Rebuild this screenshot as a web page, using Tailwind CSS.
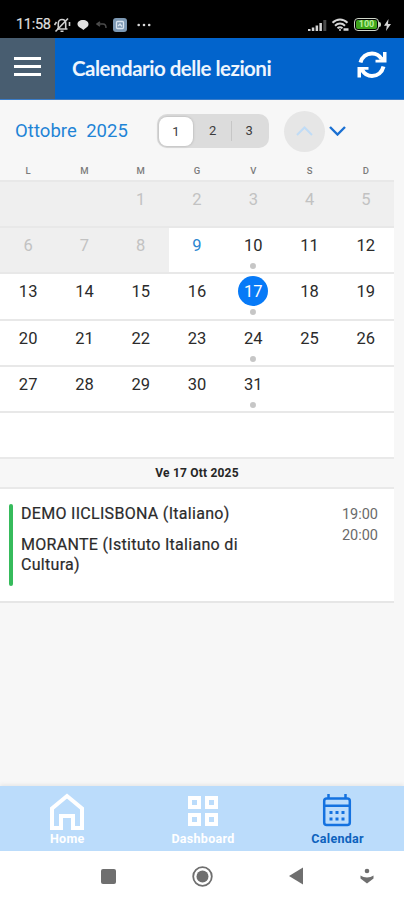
<!DOCTYPE html>
<html lang="it">
<head>
    <meta charset="UTF-8">
    <meta name="viewport" content="width=device-width, initial-scale=1">
    <title>Calendario delle lezioni</title>
    <script src="https://cdn.jsdelivr.net/npm/@tailwindcss/browser@4"></script>
</head>
<body class="w-[404px] h-[900px] overflow-hidden flex flex-col bg-[#f7f7f7] font-[Roboto,sans-serif] text-[#2b2b2b]">

    <!-- status bar -->
    <div class="h-[38px] shrink-0 bg-black text-[#dedede] flex items-center pt-[11px] pl-4 pr-[13px]">
        <span class="w-[35px] pt-px text-[14.5px] leading-none tracking-[-0.3px] whitespace-nowrap [-webkit-text-stroke:0.2px]">11:58</span>
        <svg class="ml-[2px]" width="18" height="16" viewBox="0 0 18 16" fill="none" stroke="#d0d0d0" stroke-width="1.600">
            <path d="M4 12h10.500M5.300 11.500V6.500C5.300 4 7 2.500 9 2.500S12.700 4 12.700 6.500v5M7.500 14.200h3M1.500 8l2-3M16.500 5v4"/>
            <path d="M2.500 14.500L15 1.500"/>
        </svg>
        <svg class="ml-[6px]" width="12" height="12" viewBox="0 0 12 12" fill="#e2e2e2"><path d="M6 1c3.300 0 5.500 1.700 5.500 4.300S8.500 9 6.500 11C5.500 9.500.5 8.500.5 5.300.5 2.700 2.700 1 6 1z"/></svg>
        <svg class="ml-[7px]" width="11" height="8" viewBox="0 0 11 8" fill="none" stroke="#4b4b4b" stroke-width="1.500"><path d="M4 .8L1 3l3 2.200M1.500 3H7c2 0 3 1.200 3 4"/></svg>
        <span class="ml-[6px] size-[14px] rounded-[3px] bg-[#7c98b3] flex items-center justify-center">
            <svg width="10" height="10" viewBox="0 0 10 10" fill="none" stroke="#d9e4ee" stroke-width="1.300"><rect x="1.500" y="1.500" width="7" height="7" rx="1"/><path d="M3 6l2-2 2 2.500"/></svg>
        </span>
        <svg class="ml-[10px]" width="14" height="4" viewBox="0 0 14 4" fill="#d8d8d8"><circle cx="1.700" cy="2" r="1.300"/><circle cx="7" cy="2" r="1.300"/><circle cx="12.200" cy="2" r="1.300"/></svg>
        <div class="ml-auto flex items-center">
            <svg width="19" height="12" viewBox="0 0 19 12" fill="#d6d6d6"><path d="M0 10h2.500v2H0zM3.800 8.500h2.500V12H3.800zM7.600 6.500h2.500V12H7.600zM11.400 4h2.500v8h-2.500z"/><path fill="#4a4a4a" d="M15.300 1h3v11h-3z"/></svg>
            <svg class="ml-1" width="19" height="14" viewBox="0 0 19 14" fill="none" stroke="#d6d6d6" stroke-width="2"><path d="M1.500 4.800C6 .5 12 .5 16.500 4.800M4 7.700c3-2.800 7-2.800 10 0M6.500 10.300c1.500-1.300 3.500-1.300 5 0"/><circle cx="9" cy="12" r="1" fill="#d6d6d6" stroke="none"/><path d="M12.500 11.500h5" stroke-width="2.500"/></svg>
            <span class="ml-1 w-[25px] h-[13px] rounded-[4px] border-[1.5px] border-[#cfd6c9] p-px flex">
                <span class="flex-1 rounded-[2px] bg-[#3fa51c] text-[9px] leading-[9px] font-bold text-[#b9f09c] text-center">100</span>
            </span>
            <span class="w-[2px] h-[5px] rounded-r bg-[#cfd6c9]"></span>
            <svg class="ml-[3px]" width="7" height="12" viewBox="0 0 7 12" fill="#d6d6d6"><path d="M4.500 0L0 6.800h2.800L2 12l5-7H4z"/></svg>
        </div>
    </div>

    <!-- header -->
    <header class="h-[62px] shrink-0 bg-[#0264cc] flex border-b border-[#3a7cc8]">
        <button class="w-[55px] bg-[#485d70] flex flex-col items-center gap-[5px] pt-[19px]">
            <span class="w-[27px] h-[3px] bg-white"></span>
            <span class="w-[27px] h-[3px] bg-white"></span>
            <span class="w-[27px] h-[3px] bg-white"></span>
        </button>
        <h1 class="pl-[17px] pt-[16px] text-[20.5px] leading-7 font-bold font-[Lato,sans-serif] text-[#eef5fd] tracking-[-0.5px] whitespace-nowrap">Calendario delle lezioni</h1>
        <svg class="ml-auto mr-[16px] mt-[12px]" width="32" height="30" viewBox="0 0 32 30" fill="none" stroke="#fff" stroke-width="4">
            <path d="M4.500 12.500C6 7 10.500 3.500 16 3.500c4 0 7.500 2 9.500 5.500M27.500 16.500c-1.500 6-6 9.500-11.500 9.500-4 0-7.500-2-9.500-5.500"/>
            <path d="M30.500 2v10.500h-11v-2.800H24l3-3V2zM1.500 27.500V17h11v2.800H8l-3 3v4.700z" fill="#fff" stroke="none"/>
        </svg>
    </header>

    <main class="flex-1 flex flex-col">
        <!-- month and week switch -->
        <div class="h-[62px] shrink-0 flex items-center pl-[15px]">
            <h2 class="w-[142px] pt-[2px] text-[18.5px] text-[#1f84d6] tracking-[0.05px] whitespace-pre">Ottobre  2025</h2>
            <div class="w-[112px] h-[34px] p-[2px] rounded-[10px] bg-[#dcdcdc] flex items-center text-[13px] text-[#3c3c3c] text-center">
                <span class="w-[34px] h-[29px] leading-[29px] rounded-[8px] bg-white shadow-[0_0_2px_1px_#c4c4c4]">1</span>
                <span class="flex-1 pl-[2px]">2</span>
                <span class="w-px h-5 bg-[#c6c6c6]"></span>
                <span class="flex-1">3</span>
            </div>
            <button class="ml-[15px] size-[41px] rounded-full bg-[#e6e6e6] flex items-center justify-center">
                <svg width="17" height="10" viewBox="0 0 17 10" fill="none" stroke="#c0dcf6" stroke-width="2"><path d="M1 9l7.500-7.500L16 9"/></svg>
            </button>
            <button class="ml-[4px]">
                <svg width="17" height="10" viewBox="0 0 17 10" fill="none" stroke="#1b70d2" stroke-width="2.400"><path d="M1 1l7.500 7.500L16 1"/></svg>
            </button>
        </div>

        <!-- calendar -->
        <div class="w-[394px] grid grid-cols-7 h-[18px] text-center text-[9.5px] leading-[18px] font-medium text-[#7b7b7b]">
            <span>L</span><span>M</span><span>M</span><span>G</span><span>V</span><span>S</span><span>D</span>
        </div>
        <div id="days" class="w-[394px] grid grid-cols-7 auto-rows-[46.2px] text-center text-[16.5px] bg-white"></div>

        <!-- lessons of the day -->
        <section class="w-[394px]">
            <h3 class="h-[32px] border-y-2 border-[#e9e9e9] text-center text-[12px] leading-[29px] font-bold tracking-[0.2px] text-[#262626] bg-[#f7f7f7]">Ve 17 Ott 2025</h3>
            <div class="h-[114px] bg-white border-b-2 border-[#e6e6e6] flex pl-[9px] pr-4 pt-[15px]">
                <span class="w-[4px] h-[82px] rounded-sm bg-[#36bb5c]"></span>
                <div class="ml-2 w-[240px] text-[16px] leading-[20.6px]">
                    <p class="tracking-[0.3px] whitespace-nowrap [-webkit-text-stroke:0.2px]">DEMO IICLISBONA (Italiano)</p>
                    <p class="mt-[10px] tracking-[0.3px] [-webkit-text-stroke:0.2px]">MORANTE (Istituto Italiano di<br>Cultura)</p>
                </div>
                <div class="ml-auto text-right text-[14.5px] leading-[21px] text-[#6a6a6a]">
                    <p>19:00</p>
                    <p>20:00</p>
                </div>
            </div>
        </section>
    </main>

    <!-- tabs -->
    <nav class="h-[65px] shrink-0 bg-[#bbdcfb] shadow-[0_-1px_4px_#e2e2e2] grid grid-cols-3 text-[12.5px] leading-[14px] font-bold text-white">
        <a class="flex flex-col items-center pt-[7px]">
            <svg width="36" height="38" viewBox="0 0 36 38" fill="none" stroke="#fff" stroke-width="4"><path d="M3 35V15.500L18 3l15 12.500V35h-9V23H12v12z"/></svg>
            <span class="mt-px tracking-[0.3px]">Home</span>
        </a>
        <a class="flex flex-col items-center pt-[10px]">
            <svg class="ml-[2px]" width="30" height="30" viewBox="0 0 30 30" fill="none" stroke="#fff" stroke-width="4"><path d="M2 2h9v9H2zM19 2h9v9h-9zM2 19h9v9H2zM19 19h9v9h-9z"/></svg>
            <span class="mt-[6px] ml-[2px] tracking-[0.3px]">Dashboard</span>
        </a>
        <a class="flex flex-col items-center pt-[8px] text-[#0d62bd]">
            <svg width="30" height="33" viewBox="0 0 30 33" fill="none" stroke="#1472e0" stroke-width="2.500">
                <rect x="2.200" y="4.500" width="25.600" height="26.500" rx="2.500"/>
                <path d="M2 11.800h26M6.500 0v5M23.500 0v5"/>
                <path d="M7.500 18.500h3M13.500 18.500h3M19.500 18.500h3M7.500 25h3M13.500 25h3M19.500 25h3" stroke-width="3"/>
            </svg>
            <span class="mt-[5px] ml-[2px] tracking-[0.3px]">Calendar</span>
        </a>
    </nav>

    <!-- system buttons -->
    <div class="h-[49px] shrink-0 bg-white flex items-center pt-px pl-[101px] text-[#6f6f6f]">
        <span class="size-[15px] rounded-[2px] bg-current"></span>
        <svg class="ml-[76px]" width="21" height="21" viewBox="0 0 21 21"><circle cx="10.500" cy="10.500" r="9.300" fill="none" stroke="currentColor" stroke-width="1.800"/><circle cx="10.500" cy="10.500" r="6" fill="currentColor"/></svg>
        <svg class="ml-[76px]" width="14" height="18" viewBox="0 0 14 18" fill="currentColor"><path d="M14 .5v17L0 9z"/></svg>
        <svg class="ml-[57px]" width="14" height="16" viewBox="0 0 14 16" fill="currentColor"><circle cx="7" cy="3" r="2.300"/><path d="M.5 7.500C4 10 10 10 13.500 7.500v3L7 15.500.5 10.500z"/></svg>
    </div>

    <script>
        const events = [10, 17, 24, 31];
        let html = "";
        for (let i = 0; i < 42; i++) {
            const day = i - 1; // the month starts on a Wednesday
            const valid = day >= 1 && day <= 31;
            let cell = "relative border-t-2 border-[#e8e8e8] flex justify-center pt-[2px]";
            let num = "size-[30px] rounded-full leading-[32px]";
            if (day < 9) cell += " bg-[#efefef] text-[#c2c2c2]";
            if (day === 9) num += " text-[#2a85d0]";
            if (day === 17) num += " bg-[#077af7] text-white";
            html += `<div class="${cell}"><span class="${num}">${valid ? day : ""}</span>`;
            if (events.includes(day)) html += `<i class="absolute left-1/2 -ml-[3px] top-[35px] size-[6px] rounded-full bg-[#c6c6c6]"></i>`;
            html += "</div>";
        }
        document.getElementById("days").innerHTML = html;
    </script>
</body>
</html>
